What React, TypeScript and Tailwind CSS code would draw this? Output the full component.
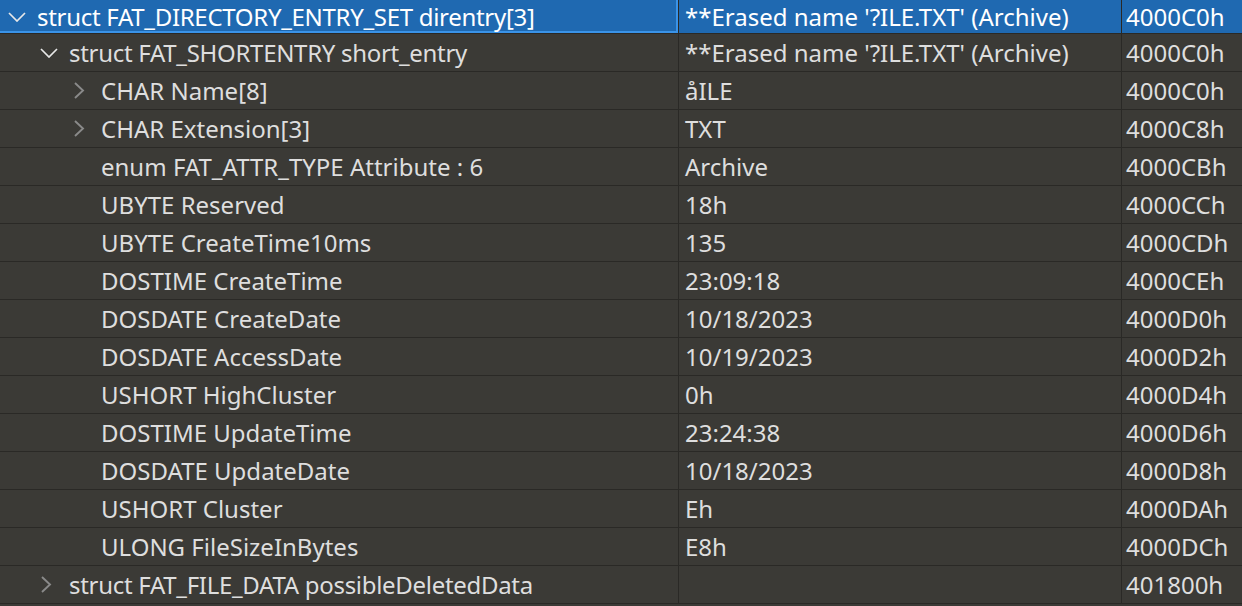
import React from 'react';

type Row = {
  name: string;
  value: string;
  start: string;
  level: number;
  toggle?: 'open' | 'closed';
};

const ROWS: Row[] = [
  { name: 'struct FAT_DIRECTORY_ENTRY_SET direntry[3]', value: "**Erased name '?ILE.TXT' (Archive)", start: '4000C0h', level: 0, toggle: 'open' },
  { name: 'struct FAT_SHORTENTRY short_entry', value: "**Erased name '?ILE.TXT' (Archive)", start: '4000C0h', level: 1, toggle: 'open' },
  { name: 'CHAR Name[8]', value: 'åILE', start: '4000C0h', level: 2, toggle: 'closed' },
  { name: 'CHAR Extension[3]', value: 'TXT', start: '4000C8h', level: 2, toggle: 'closed' },
  { name: 'enum FAT_ATTR_TYPE Attribute : 6', value: 'Archive', start: '4000CBh', level: 2 },
  { name: 'UBYTE Reserved', value: '18h', start: '4000CCh', level: 2 },
  { name: 'UBYTE CreateTime10ms', value: '135', start: '4000CDh', level: 2 },
  { name: 'DOSTIME CreateTime', value: '23:09:18', start: '4000CEh', level: 2 },
  { name: 'DOSDATE CreateDate', value: '10/18/2023', start: '4000D0h', level: 2 },
  { name: 'DOSDATE AccessDate', value: '10/19/2023', start: '4000D2h', level: 2 },
  { name: 'USHORT HighCluster', value: '0h', start: '4000D4h', level: 2 },
  { name: 'DOSTIME UpdateTime', value: '23:24:38', start: '4000D6h', level: 2 },
  { name: 'DOSDATE UpdateDate', value: '10/18/2023', start: '4000D8h', level: 2 },
  { name: 'USHORT Cluster', value: 'Eh', start: '4000DAh', level: 2 },
  { name: 'ULONG FileSizeInBytes', value: 'E8h', start: '4000DCh', level: 2 },
  { name: 'struct FAT_FILE_DATA possibleDeletedData', value: '', start: '401800h', level: 1, toggle: 'closed' },
];

const Chevron = ({ open }: { open: boolean }) =>
  open ? (
    <svg width="18" height="10" viewBox="0 0 18 10" className="text-[#e8e8e8]">
      <path d="M1 1l8 8 8-8" fill="none" stroke="currentColor" strokeWidth="1.7" />
    </svg>
  ) : (
    <svg width="12" height="17" viewBox="0 0 12 17" className="text-[#8a8a8a]">
      <path d="M2 1l8 7.5-8 7.5" fill="none" stroke="currentColor" strokeWidth="1.9" />
    </svg>
  );

const indents = ['pl-[37px]', 'pl-[69px]', 'pl-[101px]'];
const chevronPos = ['left-[8px]', 'left-[40px]', 'left-[73px]'];

export default function App() {
  return (
    <div
      className="w-[1242px] h-[606px] overflow-hidden bg-[#3b3a36] text-[#dedede] text-[24px]"
      style={{ fontFamily: '"Segoe UI", "Noto Sans", sans-serif' }}
    >
      {ROWS.map((r, i) => {
        const sel = i === 0;
        return (
          <div
            key={i}
            className={`flex border-b border-[#2a2926] ${sel ? 'h-[34px] bg-[#1f69b1] text-white' : 'h-[38px]'}`}
          >
            <div
              className={`relative w-[679px] shrink-0 flex items-center whitespace-nowrap border-r border-[#2a2926] ${indents[r.level]} ${sel ? 'shadow-[inset_-2px_-2px_0_#3a93e8]' : ''}`}
            >
              {r.toggle && (
                <span className={`absolute ${chevronPos[r.level]} top-0 bottom-0 flex items-center`}>
                  <Chevron open={r.toggle === 'open'} />
                </span>
              )}
              <span className={r.name.startsWith('struct') ? 'tracking-[-0.3px]' : ''}>{r.name}</span>
            </div>
            <div className="w-[443px] shrink-0 flex items-center pl-[6px] whitespace-nowrap border-r border-[#2a2926]">
              {r.value}
            </div>
            <div className="flex-1 flex items-center pl-[4px] whitespace-nowrap">{r.start}</div>
          </div>
        );
      })}
    </div>
  );
}
